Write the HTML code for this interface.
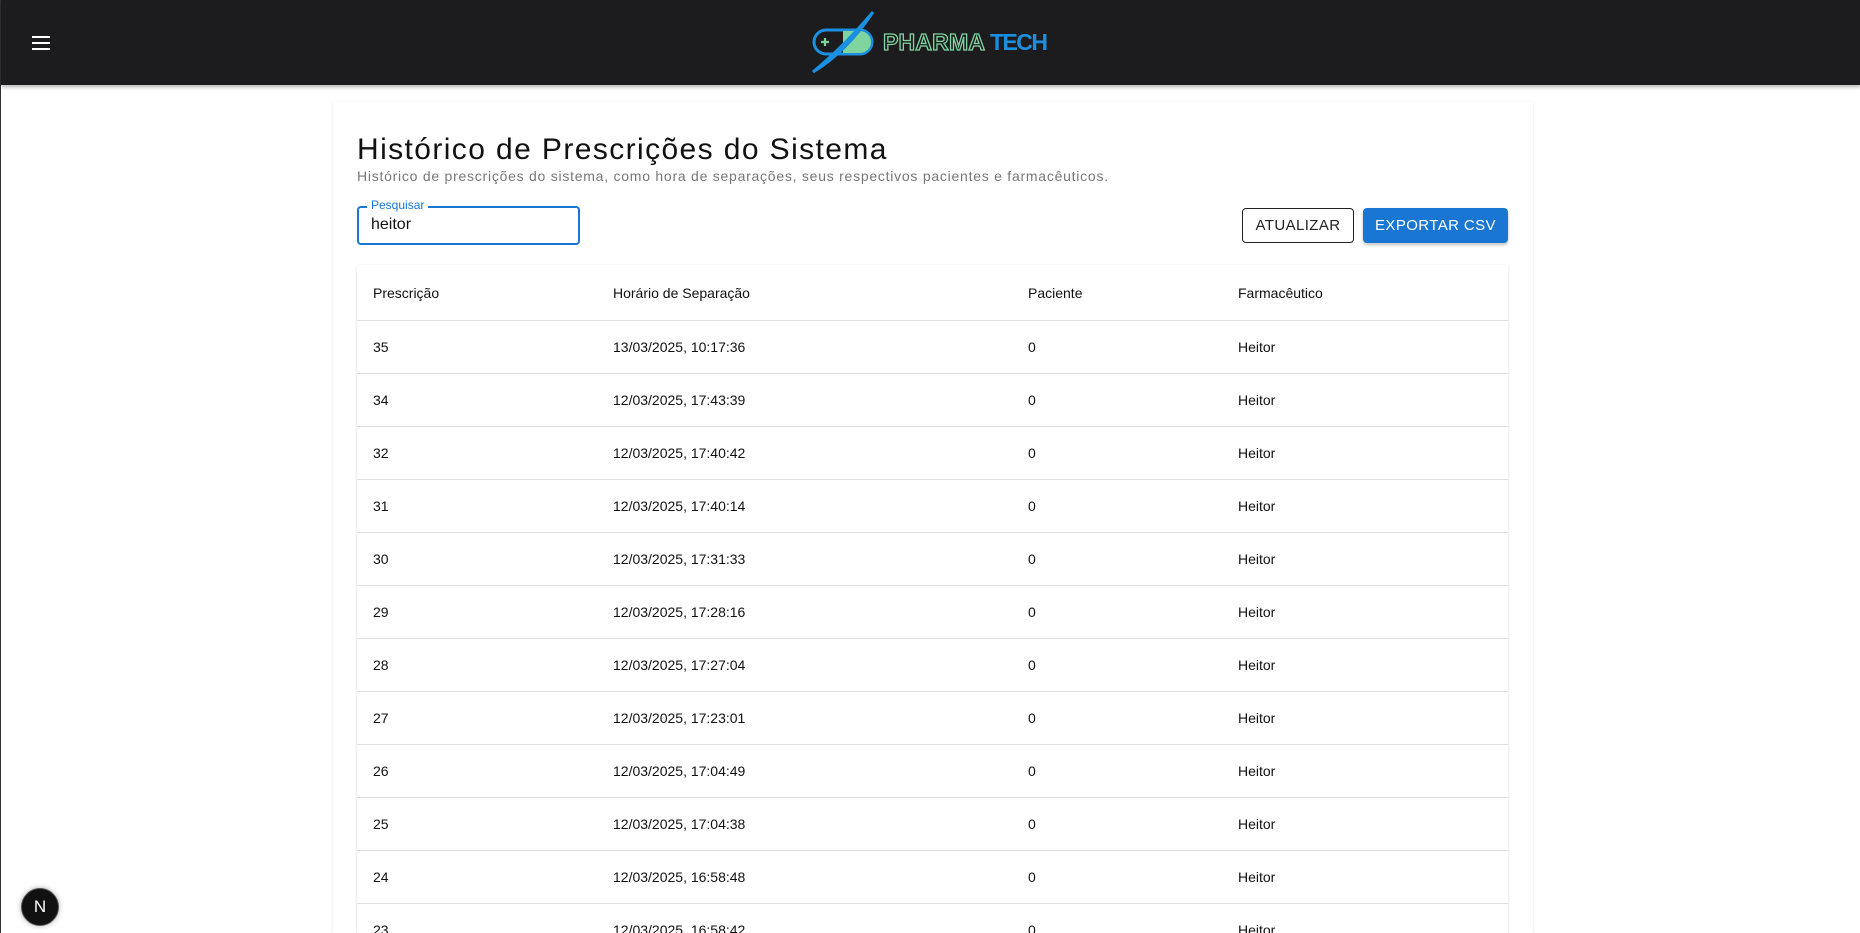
<!DOCTYPE html>
<html style="width:1860px;height:933px;overflow:hidden"><head><meta charset="utf-8"><style>
*{box-sizing:border-box;margin:0;padding:0}
body{width:1860px;height:933px;overflow:hidden;background:#fff;font-family:"Liberation Sans",sans-serif;position:relative;border-left:1px solid #333}
.nav{position:absolute;left:0;top:0;width:1860px;height:85px;background:#1c1b1e;box-shadow:0 2px 4px rgba(0,0,0,.3);z-index:2}
.ham{position:absolute;left:31px;top:36px;width:18px}
.ham i{display:block;height:2px;background:#fff;margin-bottom:4px}
.card{position:absolute;left:332px;top:102px;width:1200px;height:831px;background:#fff;box-shadow:0 1px 3px rgba(0,0,0,.12)}
h1{position:absolute;left:356px;top:133px;font-size:30px;font-weight:400;color:#111;letter-spacing:1.4px;white-space:nowrap}
.sub{position:absolute;left:356px;top:168px;font-size:14px;color:#777;letter-spacing:0.75px;white-space:nowrap}
.inp{position:absolute;left:356px;top:206px;width:223px;height:39px;border:2px solid #1976d2;border-radius:4px}
.lab{position:absolute;left:366px;top:198px;background:#fff;padding:0 4px;font-size:12px;color:#1976d2}
.val{position:absolute;left:370px;top:216px;font-size:16px;color:#111}
.btn{position:absolute;top:208px;height:35px;border-radius:4px;font-size:15px;display:flex;align-items:center;justify-content:center;letter-spacing:.4px}
.b1{left:1241px;width:112px;border:1px solid #222;color:#222;background:#fff}
.b2{left:1362px;width:145px;background:#1976d2;color:#fff;box-shadow:0 2px 3px rgba(0,0,0,.25)}
.tbl{position:absolute;left:356px;top:265px;width:1151px;height:668px;box-shadow:0 1px 3px rgba(0,0,0,.15);background:#fff;overflow:hidden}
.row{position:absolute;left:0;width:1151px;height:53px;border-bottom:1px solid #e0e0e0;font-size:14px;color:#111}
.row span{position:absolute;top:50%;transform:translateY(-50%)}
.c1{left:16px}.c2{left:256px}.c3{left:671px}.c4{left:881px}
.nx{position:absolute;left:20px;top:888px;width:38px;height:38px;border-radius:50%;background:#111;border:1px solid #555;color:#fff;font-size:17px;display:flex;align-items:center;justify-content:center;box-shadow:0 0 6px rgba(0,0,0,.3)}
</style></head><body>
<div class="nav">
<div class="ham"><i></i><i></i><i></i></div>
<svg style="position:absolute;left:800px;top:8px" width="260" height="70" viewBox="800 8 260 70">
<rect x="813" y="30" width="58" height="24" rx="12" fill="none" stroke="#1b8fe0" stroke-width="3"/>
<path d="M842 31 H859 A11 11 0 0 1 859 53 H842 Z" fill="#7fd4a0"/>
<path d="M820 42 h8 M824 38 v8" stroke="#7fd4a0" stroke-width="2.2"/>
<path d="M872 12 C860 30 840 55 812 72 C838 50 855 32 872 12 Z" fill="#1b8fe0" stroke="#1b8fe0" stroke-width="3"/>
<text x="882" y="50" font-family="Liberation Sans" font-weight="700" font-size="23" fill="#1c1b1e" stroke="#7fd4a0" stroke-width="1.3" textLength="102">PHARMA</text>
<text x="989" y="50" font-family="Liberation Sans" font-weight="700" font-size="23" fill="#1b8fe0" textLength="58">TECH</text>
</svg>
</div>
<div class="card"></div>
<h1>Histórico de Prescrições do Sistema</h1>
<div class="sub">Histórico de prescrições do sistema, como hora de separações, seus respectivos pacientes e farmacêuticos.</div>
<div class="inp"></div><div class="lab">Pesquisar</div><div class="val">heitor</div>
<div class="btn b1">ATUALIZAR</div><div class="btn b2">EXPORTAR CSV</div>
<div class="tbl">
<div class="row" style="top:0;height:56px"><span class="c1">Prescrição</span><span class="c2">Horário de Separação</span><span class="c3">Paciente</span><span class="c4">Farmacêutico</span></div>
<div class="row" style="top:56px"><span class="c1">35</span><span class="c2">13/03/2025, 10:17:36</span><span class="c3">0</span><span class="c4">Heitor</span></div>
<div class="row" style="top:109px"><span class="c1">34</span><span class="c2">12/03/2025, 17:43:39</span><span class="c3">0</span><span class="c4">Heitor</span></div>
<div class="row" style="top:162px"><span class="c1">32</span><span class="c2">12/03/2025, 17:40:42</span><span class="c3">0</span><span class="c4">Heitor</span></div>
<div class="row" style="top:215px"><span class="c1">31</span><span class="c2">12/03/2025, 17:40:14</span><span class="c3">0</span><span class="c4">Heitor</span></div>
<div class="row" style="top:268px"><span class="c1">30</span><span class="c2">12/03/2025, 17:31:33</span><span class="c3">0</span><span class="c4">Heitor</span></div>
<div class="row" style="top:321px"><span class="c1">29</span><span class="c2">12/03/2025, 17:28:16</span><span class="c3">0</span><span class="c4">Heitor</span></div>
<div class="row" style="top:374px"><span class="c1">28</span><span class="c2">12/03/2025, 17:27:04</span><span class="c3">0</span><span class="c4">Heitor</span></div>
<div class="row" style="top:427px"><span class="c1">27</span><span class="c2">12/03/2025, 17:23:01</span><span class="c3">0</span><span class="c4">Heitor</span></div>
<div class="row" style="top:480px"><span class="c1">26</span><span class="c2">12/03/2025, 17:04:49</span><span class="c3">0</span><span class="c4">Heitor</span></div>
<div class="row" style="top:533px"><span class="c1">25</span><span class="c2">12/03/2025, 17:04:38</span><span class="c3">0</span><span class="c4">Heitor</span></div>
<div class="row" style="top:586px"><span class="c1">24</span><span class="c2">12/03/2025, 16:58:48</span><span class="c3">0</span><span class="c4">Heitor</span></div>
<div class="row" style="top:639px"><span class="c1">23</span><span class="c2">12/03/2025, 16:58:42</span><span class="c3">0</span><span class="c4">Heitor</span></div>
</div>
<div class="nx">N</div>
</body></html>
